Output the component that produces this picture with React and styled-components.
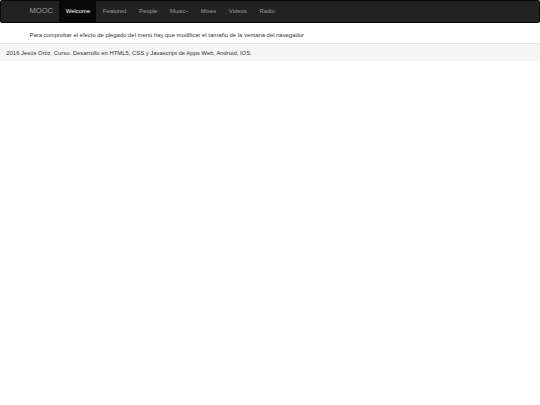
import React from 'react';
import styled, { createGlobalStyle } from 'styled-components';

// the reference is a bootstrap page shot at 1280px and scaled down to 540px
const k = 540 / 1280;
const px = (v) => `${(v * k).toFixed(3)}px`;

const GlobalStyle = createGlobalStyle`
  html, body {
    margin: 0;
    padding: 0;
    background: #fff;
  }

  body {
    font-family: 'Liberation Sans', Arial, Helvetica, sans-serif;
    font-size: ${px(14)};
    line-height: ${px(20)};
    color: #333;
  }
`;

const NavBar = styled.nav`
  background: #222;
  border: ${px(1)} solid #080808;
  border-radius: ${px(4)};
  min-height: ${px(50)};
  margin-bottom: ${px(18)};
`;

const Container = styled.div`
  width: ${px(1170)};
  margin: 0 auto;
  padding: 0 ${px(15)};
  box-sizing: border-box;
`;

const NavInner = styled(Container)`
  display: flex;
  align-items: stretch;
`;

const Brand = styled.a`
  display: block;
  padding: ${px(15)};
  margin-left: ${px(-15)};
  height: ${px(50)};
  box-sizing: border-box;
  font-size: ${px(18)};
  line-height: ${px(20)};
  color: #9d9d9d;
  text-decoration: none;
`;

const NavList = styled.ul`
  list-style: none;
  display: flex;
  margin: 0;
  padding: 0;
`;

const NavItem = styled.a`
  display: block;
  padding: ${px(15)};
  line-height: ${px(20)};
  color: ${({ $active }) => ($active ? '#fff' : '#9d9d9d')};
  background: ${({ $active }) => ($active ? '#080808' : 'transparent')};
  text-decoration: none;
`;

const Caret = styled.span`
  display: inline-block;
  width: 0;
  height: 0;
  margin-left: ${px(2)};
  vertical-align: middle;
  border-top: ${px(4)} solid #9d9d9d;
  border-left: ${px(4)} solid transparent;
  border-right: ${px(4)} solid transparent;
`;

const Text = styled.p`
  margin: 0 0 ${px(10)};
`;

const Footer = styled.footer`
  background: #f5f5f5;
  border-top: ${px(1)} solid #e5e5e5;
  padding: ${px(10)} ${px(15)};
  line-height: ${px(20)};
`;

const links = ['Welcome', 'Featured', 'People', 'Music', 'Mixes', 'Videos', 'Radio'];

const App = () => {
  return (
    <>
      <GlobalStyle />
      <NavBar>
        <NavInner>
          <Brand href="#">MOOC</Brand>
          <NavList>
            {links.map((item, i) => (
              <li key={item}>
                <NavItem href="#" $active={i === 0}>
                  {item}
                  {item === 'Music' && <Caret />}
                </NavItem>
              </li>
            ))}
          </NavList>
        </NavInner>
      </NavBar>
      <Container>
        <Text>
          Para comprobar el efecto de plegado del menú hay que modificar el tamaño de la ventana del navegador
        </Text>
      </Container>
      <Footer>
        2016 Jesús Ortiz. Curso: Desarrollo en HTML5, CSS y Javascript de Apps Web, Android, IOS.
      </Footer>
    </>
  );
};

export default App;
